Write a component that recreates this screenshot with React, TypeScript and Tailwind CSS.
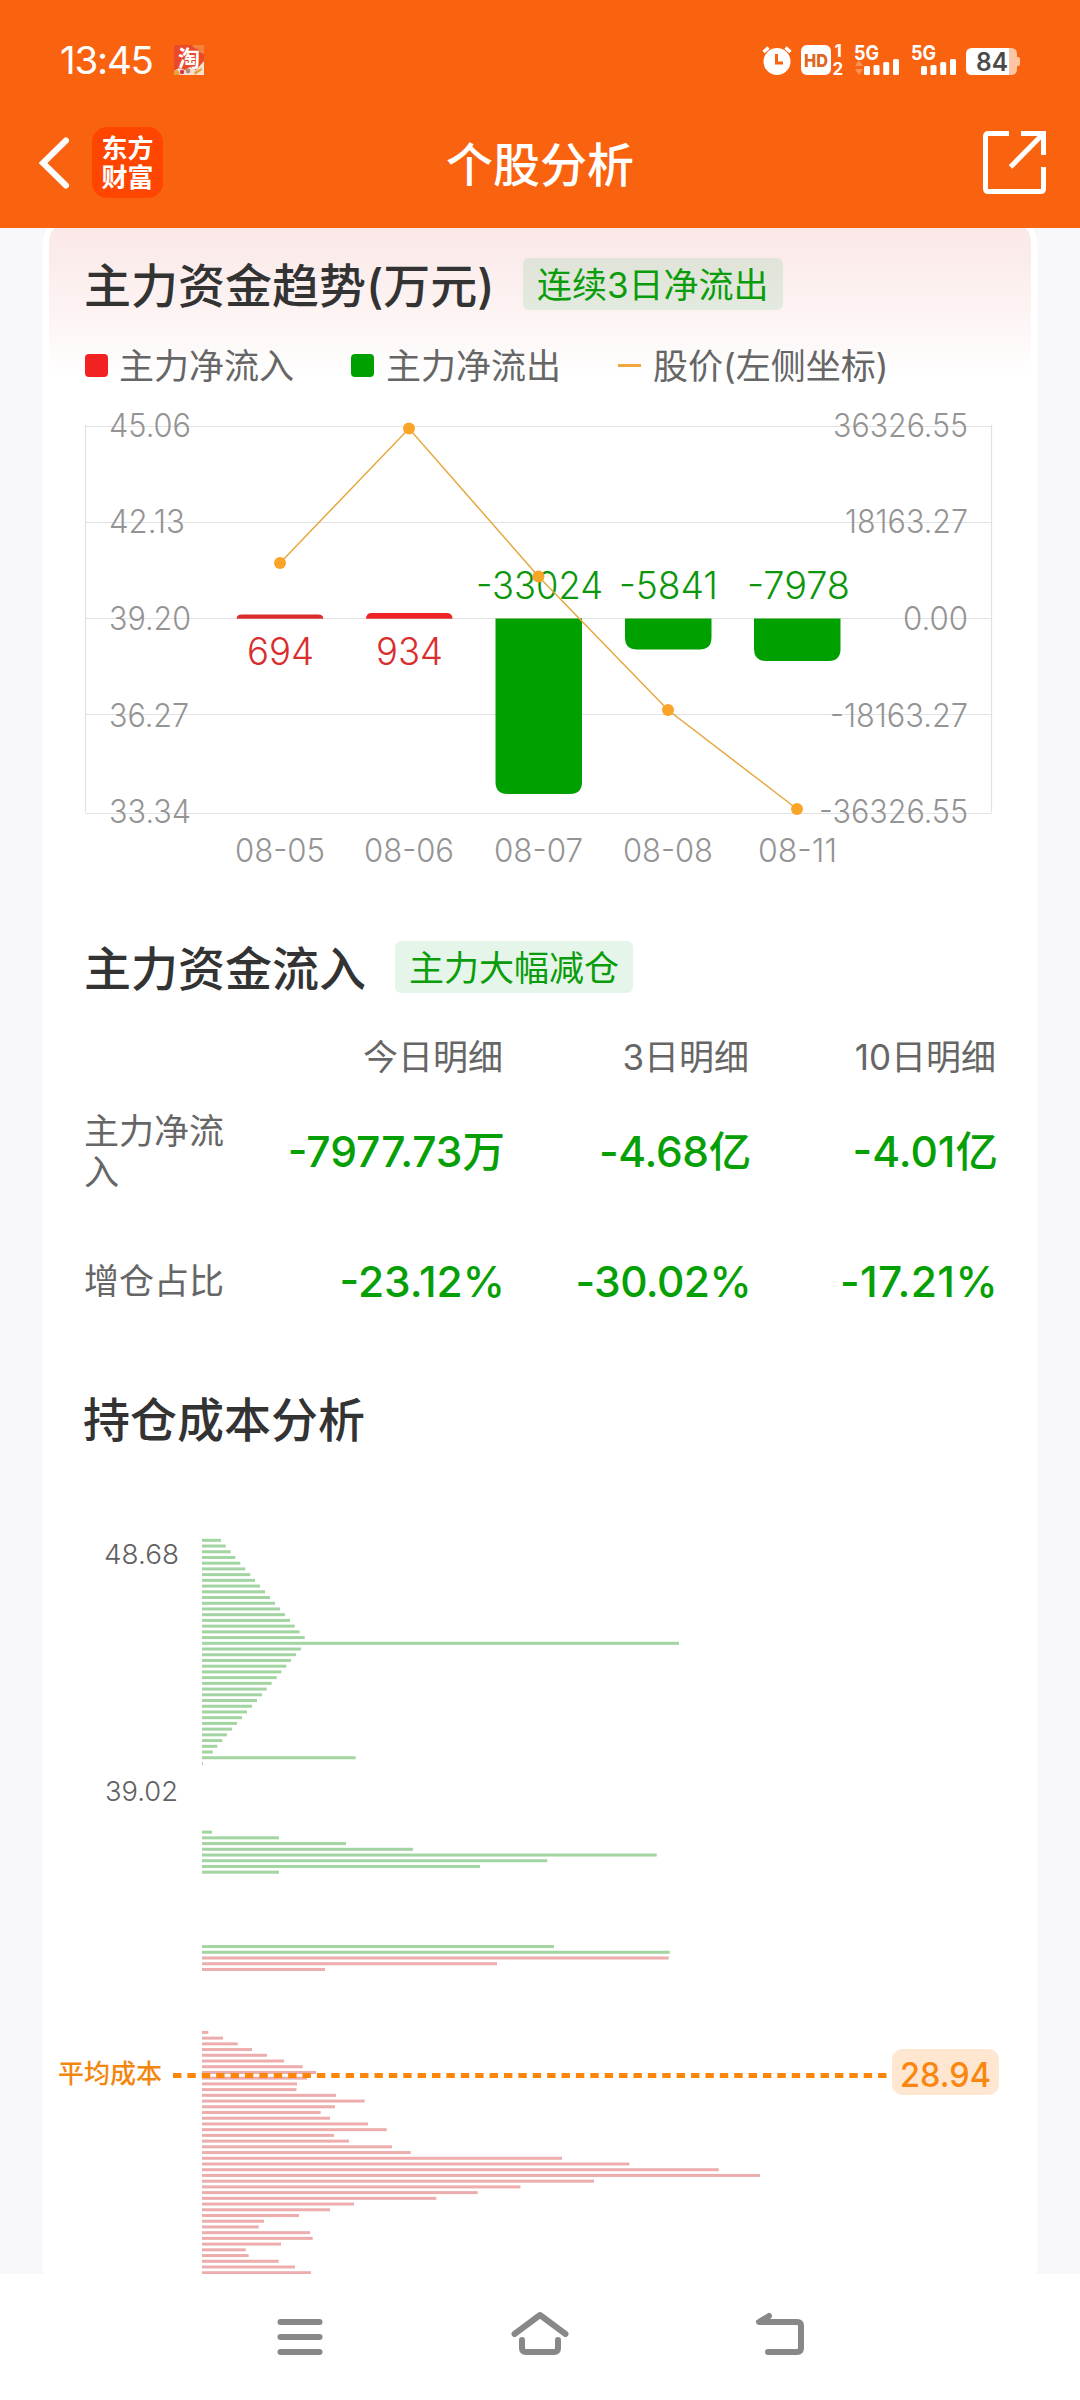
import type { ReactNode } from "react";

type Bar = { x: number; y: number; h: number };

const priceAxis = [
  { text: "45.06", x: 109, w: 82, y: 437 },
  { text: "42.13", x: 109, w: 76, y: 533 },
  { text: "39.20", x: 109, w: 82, y: 630 },
  { text: "36.27", x: 109, w: 80, y: 727 },
  { text: "33.34", x: 109, w: 82, y: 823 },
];

const flowAxis = [
  { text: "36326.55", x: 833, w: 135, y: 437 },
  { text: "18163.27", x: 845, w: 123, y: 533 },
  { text: "0.00", x: 903, w: 65, y: 630 },
  { text: "-18163.27", x: 830, w: 138, y: 727 },
  { text: "-36326.55", x: 819, w: 149, y: 823 },
];

const dates = [
  { text: "08-05", x: 235, w: 90, y: 862 },
  { text: "08-06", x: 364, w: 90, y: 862 },
  { text: "08-07", x: 494, w: 89, y: 862 },
  { text: "08-08", x: 623, w: 90, y: 862 },
  { text: "08-11", x: 758, w: 79, y: 862 },
];

const points = [
  [280, 563],
  [409, 428.5],
  [538.5, 576.5],
  [668, 710],
  [797, 809],
];

const outBars: Bar[] = [
  { x: 495.5, y: 618.5, h: 175.5 },
  { x: 625, y: 618.5, h: 31 },
  { x: 754, y: 618.5, h: 42.5 },
];

// slot number of the first bar in each run, then bar lengths
const costRuns = [
  {
    start: 0,
    color: "#a2d5a2",
    bars: [
      19, 23.7, 28.7, 33.3, 38.3, 43.3, 48.3, 53, 58, 63, 68, 73, 78, 83, 88, 92.7, 97.7, 102.7, 477,
      99, 94, 89, 84.3, 79.3, 74.7, 69.7, 64.7, 60, 55, 50, 45, 40, 35, 30, 25, 20.3, 15.3, 10.7, 153.7, 1,
    ],
  },
  { start: 51, color: "#a2d5a2", bars: [10, 77, 144, 211, 454.7, 345.3, 278, 77] },
  { start: 71, color: "#a2d5a2", bars: [352, 467.7] },
  { start: 73, color: "#edadad", bars: [466.7, 295, 123] },
  {
    start: 86,
    color: "#edadad",
    bars: [
      6.3, 21, 35.7, 50, 65, 82, 100.7, 114, 105, 95, 94.5, 134, 162.7, 133, 118.7, 128, 166, 184.7, 132, 147,
      190, 208.7, 360, 427.4, 516.8, 558, 392, 318.4, 275.6, 234.3, 152, 128, 97, 62, 56.7, 108, 110.7, 79, 43.7,
      46.7, 76.7, 93, 109,
    ],
  },
];

function Label({ text, x, y, w }: { text: string; x: number; y: number; w: number }) {
  return (
    <text x={x} y={y} textLength={w} lengthAdjust="spacingAndGlyphs">
      {text}
    </text>
  );
}

function Signal({ roaming }: { roaming?: boolean }) {
  return (
    <svg className="overflow-visible" width="45" height="30" viewBox="0 0 45 30" fill="#fff">
      <text x="-1" y="14.5" fontSize="20" fontWeight="700" textLength="25" lengthAdjust="spacingAndGlyphs">
        5G
      </text>
      {roaming && <path d="M0 21l4-6 4 6zM0 24h8l-4 6z" opacity=".3" />}
      <rect x="9" y="21" width="6" height="9" rx="1.5" />
      <rect x="18.5" y="20" width="6" height="10" rx="1.5" />
      <rect x="28.2" y="17" width="6" height="13" rx="1.5" />
      <rect x="38" y="14" width="6" height="16" rx="1.5" />
    </svg>
  );
}

function StatusBar() {
  return (
    <div className="flex h-[90px] items-start pt-[45px] pl-[60px] text-white">
      <div className="-mt-[5px] w-[114px] text-[38.5px] leading-10 tracking-[-1.2px]">13:45</div>

      {/* Taobao notification */}
      <svg className="overflow-visible" width="30" height="30" viewBox="0 0 30 30">
        <rect width="30" height="30" rx="2" fill="#ea4a2c" />
        <path d="M18 0h12v9q-5-1-6-5-4 0-6-4z" fill="#f5813f" />
        <text x="4" y="20.5" fontSize="22" fontWeight="700" fill="#fff">淘</text>
        <path d="M0 30v-4l5-3 6 2 5-3 6 3 8-9v14z" fill="#f6e3d2" />
        <path d="M0 30v-4l4-1 2 5zM20 27l8-4v2l-7 5z" fill="#e8a03a" />
        <circle cx="8" cy="27" r="2.2" fill="#d33b4a" />
        <circle cx="14" cy="26" r="2.4" fill="#b98a78" />
      </svg>

      <div className="ml-[558px] flex">
        <svg width="30" height="30" viewBox="0 0 30 30">
          <circle cx="15" cy="16.5" r="13.5" fill="#fff" />
          <path d="M1.5 7l5-4.5M28.5 7l-5-4.5" stroke="#fff" strokeWidth="3.5" />
          <path d="M14.5 9v9h6.5" stroke="#f96310" strokeWidth="3" fill="none" />
        </svg>
        <svg className="ml-[9px] overflow-visible" width="44" height="30" viewBox="0 0 44 30" fill="#fff">
          <rect width="30" height="30" rx="6" />
          <text x="3" y="21.5" fontSize="18" fontWeight="800" fill="#e0651f" textLength="24" lengthAdjust="spacingAndGlyphs">
            HD
          </text>
          <text x="33.5" y="12" fontSize="17" fontWeight="700">1</text>
          <text x="31.5" y="30" fontSize="17" fontWeight="700">2</text>
        </svg>
        <div className="ml-[10px]">
          <Signal roaming />
        </div>
        <div className="ml-[12px]">
          <Signal />
        </div>
        <svg className="ml-[9px] overflow-visible" width="54" height="30" viewBox="0 0 54 30">
          <path d="M36 3h9q6 0 6 6v3h1q2 0 2 2v5q0 2-2 2h-1v3q0 6-6 6h-9z" fill="#fcc5a4" />
          <path d="M6 3h37v27H6q-6 0-6-6V9q0-6 6-6z" fill="#fff" />
          <text x="10" y="25.5" fontSize="25" fontWeight="600" fill="#4a4a4a" textLength="32" lengthAdjust="spacingAndGlyphs">
            84
          </text>
        </svg>
      </div>
    </div>
  );
}

function TitleBar() {
  return (
    <div className="grid h-[138px] grid-cols-[1fr_auto_1fr] items-start text-white">
      <div className="flex pt-[37px] pl-[38px]">
        <svg width="34" height="71" viewBox="0 0 34 71" fill="none" stroke="#fff" strokeWidth="6" strokeLinecap="round">
          <path d="M28 13.500L5 36l23 22.500" strokeLinejoin="miter" />
        </svg>
        <div className="ml-[20px] flex h-[71px] w-[71px] flex-col items-center justify-center rounded-[15px] bg-[#ff4600] text-[26px] leading-[29px] font-bold">
          <span>东方</span>
          <span>财富</span>
        </div>
      </div>
      <h1 className="pt-[45px] text-[47px] leading-[60px] font-medium">个股分析</h1>
      <div className="flex justify-end pt-[41px] pr-[34px]">
        <svg width="63" height="63" viewBox="0 0 63 63" fill="none" stroke="#fff" strokeWidth="5">
          <path d="M26 2.500H5.500q-3 0-3 3v52q0 3 3 3h52q3 0 3-3V36" />
          <path d="M38 2.500h22.500V24M60 3L27.500 36" />
        </svg>
      </div>
    </div>
  );
}

function SectionHead({ title, width, children }: { title: string; width: string; children?: ReactNode }) {
  return (
    <div className="flex h-[52px] items-center">
      <h2 className={`${width} shrink-0 pt-1 text-[47px] leading-[52px] font-medium whitespace-nowrap text-[#333]`}>{title}</h2>
      {children && (
        <span className="h-[52px] rounded-md bg-[#009a30]/10 px-[14px] text-[35px] leading-[54px] whitespace-nowrap text-[#0a9c0a]">
          {children}
        </span>
      )}
    </div>
  );
}

function FlowChart() {
  return (
    <svg className="block" width="994" height="500" viewBox="43 400 994 500">
      <g stroke="#e2e2e2" strokeWidth="1.2">
        {[426.5, 522.5, 618.5, 714.5, 813.5].map((y) => (
          <line key={y} x1="85" x2="992" y1={y} y2={y} />
        ))}
        <line x1="85.5" x2="85.5" y1="425" y2="812" />
        <line x1="991.5" x2="991.5" y1="425" y2="812" />
      </g>

      <g fill="#949494" fontSize="32" fontWeight="350">
        {[...priceAxis, ...flowAxis, ...dates].map((l) => (
          <Label key={l.text} {...l} />
        ))}
      </g>

      <path d="M236.700 618.700q0-4.200 5-4.200h76.500q5 0 5 4.200z" fill="#dc2c2c" />
      <path d="M366 618.700q0-5.700 6-5.700h74.500q6 0 6 5.700z" fill="#ee2424" />
      {outBars.map((b) => (
        <path
          key={b.x}
          d={`M${b.x} ${b.y}h86.500v${b.h - 12}q0 12-12 12h-62.500q-12 0-12-12z`}
          fill="#00a000"
        />
      ))}

      <g fontSize="37.5" fontWeight="350">
        <g fill="#d92e2e">
          <Label text="694" x={247} w={67} y={665} />
          <Label text="934" x={376} w={67} y={665} />
        </g>
        <g fill="#0c960c">
          <Label text="-33024" x={476} w={127} y={599} />
          <Label text="-5841" x={619} w={99} y={599} />
          <Label text="-7978" x={747} w={103} y={599} />
        </g>
      </g>

      <polyline points={points.map((p) => p.join(",")).join(" ")} fill="none" stroke="#e5a83f" strokeWidth="1.5" />
      {points.map(([x, y]) => (
        <circle key={x} cx={x} cy={y} r="6" fill="#faa528" />
      ))}
    </svg>
  );
}

function Value({ children, tracking = "tracking-normal" }: { children: ReactNode; tracking?: string }) {
  return (
    <span className={`-mr-0.5 pt-0.5 text-right text-[42.5px] leading-[42px] font-[550] whitespace-nowrap text-[#06a006] ${tracking}`}>
      {children}
    </span>
  );
}

function CostChart() {
  return (
    <svg className="block" width="994" height="774" viewBox="43 1500 994 774">
      <g fill="#606060" fontSize="27.5" fontWeight="350">
        <Label text="48.68" x={104} w={75} y={1564} />
        <Label text="39.02" x={105} w={73} y={1801} />
      </g>
      {costRuns.map((run) =>
        run.bars.map((len, i) => (
          <rect
            key={run.start + i}
            x="202"
            y={1538.8 + (run.start + i) * 5.722}
            width={len}
            height="3"
            fill={run.color}
          />
        ))
      )}

      <line x1="173" x2="888" y1="2075.5" y2="2075.5" stroke="#fb860a" strokeWidth="5" strokeDasharray="8.4 5.99" />
      <text x="58" y="2083" fontSize="26" fontWeight="500" fill="#f2860f" textLength="104">
        平均成本
      </text>
      <rect x="892" y="2049" width="107" height="46" rx="11" fill="#ffe6d0" />
      <g fill="#f8860f" fontSize="34" fontWeight="500">
        <Label text="28.94" x={900} w={91} y={2087} />
      </g>
    </svg>
  );
}

function NavBar() {
  return (
    <div className="flex h-[126px] justify-center gap-[180px] bg-white pt-[36px]">
      <svg width="60" height="50" viewBox="0 0 60 50" fill="#888">
        <rect x="7.5" y="9" width="45" height="6" rx="3" />
        <rect x="7.5" y="24" width="45" height="6" rx="3" />
        <rect x="7.5" y="39" width="45" height="6" rx="3" />
      </svg>
      <svg width="60" height="50" viewBox="0 0 60 50" fill="none" stroke="#888" strokeWidth="6" strokeLinecap="round" strokeLinejoin="round">
        <path d="M4.500 24L30 5l25.500 19" />
        <path d="M12 30v8q0 4 4 4h28q4 0 4-4v-8" />
      </svg>
      <svg width="60" height="50" viewBox="0 0 60 50" fill="none" stroke="#888" strokeWidth="6" strokeLinecap="round" strokeLinejoin="round">
        <path d="M19 6L9 12h38q4 0 4 4v22q0 4-4 4H18" />
      </svg>
    </div>
  );
}

export default function App() {
  return (
    <div className="h-[2400px] w-[1080px] overflow-hidden bg-[#f8f8fb] font-['Inter','Noto_Sans_CJK_SC',sans-serif]">
      <header className="h-[228px] bg-[#f96310]">
        <StatusBar />
        <TitleBar />
      </header>

      <main className="h-[2046px] overflow-hidden px-[43px]">
        <div className="-mt-[9px] rounded-t-[24px] bg-white px-[6px]">
          <div className="h-[2055px] rounded-t-[24px] bg-[linear-gradient(#fae8e7_9px,#fdf3f3_90px,#ffffff_160px)] pt-[39px]">
            <section className="-mx-[6px]">
              <div className="pl-[42px]">
                <div className="-ml-px">
                  <SectionHead title="主力资金趋势(万元)" width="w-[439px]">连续3日净流出</SectionHead>
                </div>
                <div className="mt-[29px] flex h-[52px] items-center text-[35px] text-[#666]">
                  <i className="size-[23px] rounded bg-[#f32222]" />
                  <span className="ml-[11px] w-[232px] pt-0.5">主力净流入</span>
                  <i className="size-[23px] rounded bg-[#00a000]" />
                  <span className="ml-[12px] w-[232px] pt-0.5">主力净流出</span>
                  <i className="h-[3px] w-[23px] bg-[#f0a83a]" />
                  <span className="ml-[12px] pt-0.5">股价(左侧坐标)</span>
                </div>
              </div>
              <div className="mt-[9px]">
                <FlowChart />
              </div>
            </section>

            <section className="-mx-[6px] mt-[41px] pl-[41px]">
              <SectionHead title="主力资金流入" width="w-[311px]">主力大幅减仓</SectionHead>
              <div className="mt-[38px] grid h-[50px] grid-cols-[151px_268px_246px_247px] items-center text-right text-[35px] text-[#666]">
                <span />
                <span>今日明细</span>
                <span>3日明细</span>
                <span>10日明细</span>
              </div>
              <div className="mt-[28px] grid h-[82px] grid-cols-[151px_268px_246px_247px] items-center">
                <span className="pt-0.5 text-[35px] leading-[41px] text-[#666]">主力净流入</span>
                <Value>-7977.73万</Value>
                <Value tracking="tracking-[-0.3px]">-4.68亿</Value>
                <Value>-4.01亿</Value>
              </div>
              <div className="mt-[68px] grid h-[42px] grid-cols-[151px_268px_246px_247px] items-center">
                <span className="text-[35px] leading-[42px] text-[#666]">增仓占比</span>
                <Value>-23.12%</Value>
                <Value tracking="tracking-[-0.6px]">-30.02%</Value>
                <Value tracking="tracking-[0.4px]">-17.21%</Value>
              </div>
            </section>

            <section className="-mx-[6px] mt-[91px]">
              <div className="pl-[40px]">
                <SectionHead title="持仓成本分析" width="w-[310px]" />
              </div>
              <div className="mt-[56px]">
                <CostChart />
              </div>
            </section>
          </div>
        </div>
      </main>

      <NavBar />
    </div>
  );
}
